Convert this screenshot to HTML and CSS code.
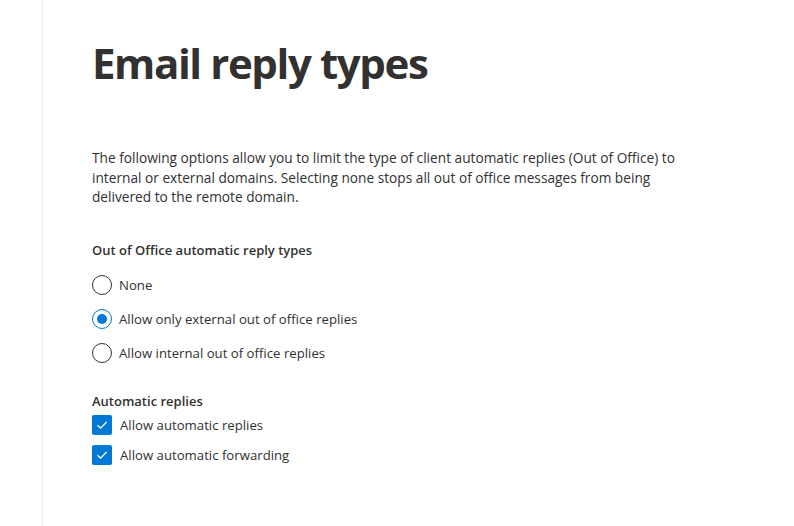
FILE: index.html
```html
<!DOCTYPE html>
<html>
<head>
<meta charset="utf-8">
<link rel="stylesheet" href="styles.css">
</head>
<body>
<div class="page">
  <div class="panel">
    <h1 class="title">Email reply types</h1>
    <p class="desc">The following options allow you to limit the type of client automatic replies (Out of Office) to internal or external domains. Selecting none stops all out of office messages from being delivered to the remote domain.</p>
    <div class="group">
      <div class="label">Out of Office automatic reply types</div>
      <div class="radios">
        <div class="radio"><span class="circle"></span><span>None</span></div>
        <div class="radio checked"><span class="circle"></span><span>Allow only external out of office replies</span></div>
        <div class="radio"><span class="circle"></span><span>Allow internal out of office replies</span></div>
      </div>
    </div>
    <div class="group2">
      <div class="label">Automatic replies</div>
      <div class="checks">
        <div class="check"><span class="box"><svg width="20" height="20" viewBox="0 0 20 20"><path d="M5.5 10.2 L8.6 13.2 L14.6 7" fill="none" stroke="#fff" stroke-width="1.3"/></svg></span><span>Allow automatic replies</span></div>
        <div class="check"><span class="box"><svg width="20" height="20" viewBox="0 0 20 20"><path d="M5.5 10.2 L8.6 13.2 L14.6 7" fill="none" stroke="#fff" stroke-width="1.3"/></svg></span><span>Allow automatic forwarding</span></div>
      </div>
    </div>
  </div>
</div>
</body>
</html>
```
FILE: styles.css
```css
html, body {
  margin: 0;
  padding: 0;
  background: #fff;
}
body {
  font-family: "Open Sans", "Noto Sans", sans-serif;
  color: #323130;
}
.page {
  height: 526px;
  padding-left: 42px;
}
.panel {
  height: 100%;
  border-left: 1px solid #edebe9;
  padding-left: 49px;
  padding-top: 37px;
  box-sizing: border-box;
}
.title {
  margin: 0;
  font-size: 42px;
  font-weight: 700;
  line-height: 52px;
  letter-spacing: -1.4px;
}
.desc {
  margin: 59px 0 0;
  width: 600px;
  font-size: 13.7px;
  line-height: 19.5px;
}
.group {
  margin-top: 33px;
}
.label {
  font-size: 13px;
  font-weight: 600;
  line-height: 20px;
}
.radios {
  display: flex;
  flex-direction: column;
  gap: 14px;
  margin-top: 15px;
}
.radio {
  display: flex;
  align-items: center;
  gap: 7px;
  font-size: 13.2px;
  height: 20px;
}
.circle {
  width: 20px;
  height: 20px;
  box-sizing: border-box;
  border: 1px solid #323130;
  border-radius: 50%;
  position: relative;
  flex: none;
}
.radio.checked .circle {
  border-color: #0078d4;
}
.radio.checked .circle::after {
  content: "";
  position: absolute;
  left: 4px;
  top: 4px;
  width: 10px;
  height: 10px;
  border-radius: 50%;
  background: #0078d4;
}
.group2 {
  margin-top: 28px;
}
.checks {
  display: flex;
  flex-direction: column;
  gap: 10px;
  margin-top: 4px;
}
.check {
  display: flex;
  align-items: center;
  gap: 8px;
  font-size: 13.2px;
  height: 20px;
}
.box {
  width: 20px;
  height: 20px;
  border-radius: 2px;
  background: #0078d4;
  flex: none;
  display: block;
}
.box svg {
  display: block;
}
```
